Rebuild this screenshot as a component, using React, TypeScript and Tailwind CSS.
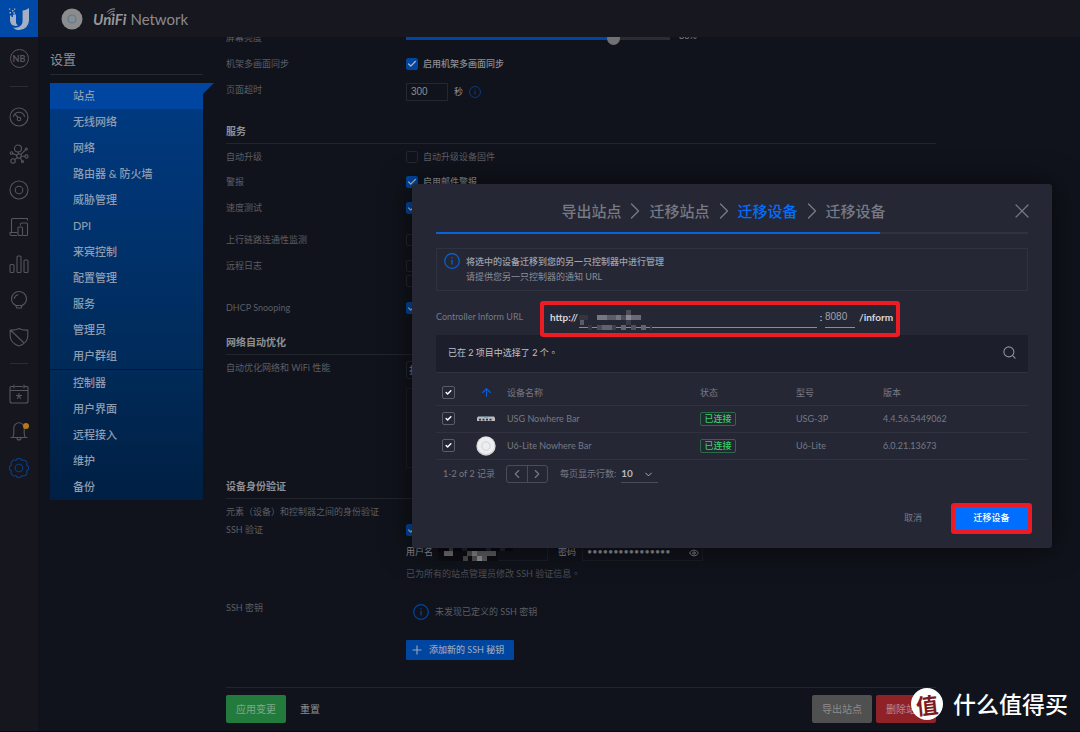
import type { ReactNode } from "react"
import clsx from "clsx"
import { ArrowUp, Check as CheckIcon, ChevronDown, ChevronLeft, ChevronRight, Eye, Plus, Search, X } from "lucide-react"

const siteMenu = [
  "站点",
  "无线网络",
  "网络",
  "路由器 & 防火墙",
  "威胁管理",
  "DPI",
  "来宾控制",
  "配置管理",
  "服务",
  "管理员",
  "用户群组",
]
const controllerMenu = ["控制器", "用户界面", "远程接入", "维护", "备份"]

const devices = [
  { kind: "gateway", name: "USG Nowhere Bar", model: "USG-3P", version: "4.4.56.5449062" },
  { kind: "ap", name: "U6-Lite Nowhere Bar", model: "U6-Lite", version: "6.0.21.13673" },
]

const steps = ["导出站点", "迁移站点", "迁移设备", "迁移设备"]

function Glyph({ children }: { children: ReactNode }) {
  return (
    <svg
      viewBox="0 0 20 20"
      className="size-5"
      fill="none"
      stroke="currentColor"
      strokeWidth="1.1"
      strokeLinecap="round"
      strokeLinejoin="round"
      aria-hidden="true"
    >
      {children}
    </svg>
  )
}

const mainIcons = [
  {
    label: "仪表板",
    icon: (
      <Glyph>
        <circle cx="10" cy="10" r="9" />
        <path d="M4.5 9.5a5.700 5.700 0 0 1 11 0M6.500 7.800l2.600 2.700" />
        <circle cx="10" cy="12" r="1.800" />
      </Glyph>
    ),
  },
  {
    label: "拓扑",
    icon: (
      <Glyph>
        <circle cx="9" cy="4.5" r="3.5" />
        <circle cx="10" cy="12" r="2.3" />
        <circle cx="2.5" cy="9" r="1.3" />
        <circle cx="17.5" cy="12.5" r="1.6" />
        <circle cx="4" cy="17" r="2.2" />
        <circle cx="17.3" cy="5" r="1" />
        <circle cx="13.5" cy="17.5" r="1" />
        <path d="M9.3 8l.3 1.7M3.8 9.4l4 1.8M12.3 12.2h3.6M8.3 13.6l-2.8 2M11.8 10.4l4.8-4.6M11.2 14l1.800 2.700" />
      </Glyph>
    ),
  },
  {
    label: "设备",
    icon: (
      <Glyph>
        <circle cx="10" cy="10" r="9" />
        <circle cx="10" cy="10" r="3.8" />
      </Glyph>
    ),
  },
  {
    label: "客户端",
    icon: (
      <Glyph>
        <path d="M18.5 1.5h-15a1 1 0 0 0-1 1v13M18.5 1.5v1.5M7.5 18.5h-5a1.500 1.500 0 0 1-1.500-1.500v-1.500h7" />
        <rect x="9" y="10" width="4.5" height="8.5" rx="1" />
        <path d="M11.500 8V7a1 1 0 0 1 1-1h5a1 1 0 0 1 1 1v10.500a1 1 0 0 1-1 1h-3" />
      </Glyph>
    ),
  },
  {
    label: "统计",
    icon: (
      <Glyph>
        <rect x="1" y="10.500" width="4" height="8" rx="1" />
        <rect x="8" y="2" width="4" height="16.500" rx="1" />
        <rect x="15" y="6" width="4" height="12.500" rx="1" />
      </Glyph>
    ),
  },
  {
    label: "洞察",
    icon: (
      <Glyph>
        <path d="M7 15.500C4 14 2.500 11.700 2.500 9a7.500 7.500 0 0 1 15 0c0 2.700-1.500 5-4.500 6.500z" />
        <path d="M7 16l.8 2h4.400l.8-2M5.300 8.500c.3-2 1.600-3.400 3.700-3.800" />
      </Glyph>
    ),
  },
  {
    label: "威胁管理",
    icon: (
      <Glyph>
        <path d="M10 1.500c2.600 1.300 5.400 1.800 8.800 1.500v6c0 4.800-3.300 8-8.800 10C4.500 17 1.200 13.800 1.200 9V3c3.400.3 6.200-.2 8.800-1.500zM1.500 3l13.500 13" />
      </Glyph>
    ),
  },
]

const lowerIcons = [
  {
    label: "事件",
    icon: (
      <Glyph>
        <path d="M4 2.500H2a1 1 0 0 0-1 1V17a2 2 0 0 0 2 2h14a2 2 0 0 0 2-2V3.500a1 1 0 0 0-1-1h-2M6.500 2.500h7M1 6.500h18M5 1v3M15 1v3" />
        <path d="M10 9.500v2.500M10 12l-2.500-.6M10 12l2.500-.6M10 12l-1.600 2.500M10 12l1.600 2.500" />
      </Glyph>
    ),
  },
  {
    label: "警报",
    icon: (
      <Glyph>
        <path d="M2 16.500h16M3.800 16.500c.8-1.500 1-3 1-5V7a5.200 5.200 0 0 1 10.400 0v4.500c0 2 .2 3.500 1 5M8 17a2 2 0 0 0 4 0" />
        <circle cx="17" cy="5" r="3" fill="#b87818" stroke="none" />
      </Glyph>
    ),
  },
  {
    label: "设置",
    icon: (
      <Glyph>
        <circle cx="10" cy="10" r="3.8" />
        <path d="M17.600 6.900A3.400 3.400 0 0 1 17.600 13.100A3.400 3.400 0 0 1 13.100 17.600A3.400 3.400 0 0 1 6.900 17.600A3.400 3.400 0 0 1 2.400 13.100A3.400 3.400 0 0 1 2.400 6.900A3.400 3.400 0 0 1 6.900 2.400A3.400 3.400 0 0 1 13.100 2.400A3.400 3.400 0 0 1 17.600 6.900z" />
      </Glyph>
    ),
  },
]

function Logo() {
  return (
    <svg viewBox="0 0 22 24" className="h-6 w-[22px]" fill="currentColor" aria-hidden="true">
      <path d="M21 1v12.500a9.800 9.800 0 0 1-9.500 9.500c-3 0-5-1-6.500-2.600 2.800.8 5.300.3 7.200-1.300 1.600-1.300 2.400-3 2.400-5.400V3.500C17 3.200 19 2.500 21 1z" />
      <path d="M2 8.500h1.500V10H5V7.500h3v7.200c0 1.800.7 3 2.300 3.600-2 .9-4.300.8-6.300-.2-1.300-1.600-2-3.300-2-5.300z" />
      <path d="M1 1.500h1.300v1.300H1zM4 3h1.500v1.500H4zM6 1.500h1.300v1.300H6zM1.500 5h1.500v1.500H1.500zM5.500 5.300H7v1.500H5.500z" />
    </svg>
  )
}

function InfoIcon({ className }: { className?: string }) {
  return (
    <svg viewBox="0 0 16 16" className={clsx("shrink-0", className)} fill="none" stroke="currentColor" aria-hidden="true">
      <circle cx="8" cy="8" r="7.3" strokeWidth="1.2" />
      <path d="M8 7v4.500M8 4.300v1.300" strokeWidth="1.300" />
    </svg>
  )
}

function Mosaic({ cells, className }: { cells: [number, number, number, string][]; className?: string }) {
  return (
    <svg viewBox="0 0 80 20" className={clsx("pointer-events-none absolute h-5 w-20", className)} aria-hidden="true">
      {cells.map(([x, y, w, fill]) => (
        <rect key={`${x}-${y}`} x={x} y={y} width={w} height="5" fill={fill} />
      ))}
    </svg>
  )
}

const hostCells: [number, number, number, string][] = [
  [47, 0, 5, "#4c4d59"],
  [0, 5, 9, "#343541"],
  [18, 5, 10, "#767781"],
  [28, 5, 9, "#5b5c68"],
  [37, 5, 5, "#73747e"],
  [42, 5, 5, "#4a4b57"],
  [47, 5, 5, "#868790"],
  [52, 5, 10, "#696a75"],
  [1, 10, 4, "#5b5c68"],
  [47, 10, 5, "#3a3b47"],
  [9, 15, 4, "#343541"],
  [18, 15, 5, "#4a4b57"],
  [23, 15, 10, "#62636e"],
  [33, 15, 4, "#3e3f4b"],
  [42, 15, 5, "#62636e"],
  [52, 15, 5, "#50515d"],
  [62, 15, 5, "#62636e"],
  [71, 15, 2, "#343541"],
]

const userCells: [number, number, number, string][] = [
  [0, 0, 75, "#090a11"],
  [11, 0, 4, "#3b3b3f"],
  [24, 0, 5, "#20212b"],
  [48, 0, 5, "#20212b"],
  [62, 0, 5, "#20212b"],
  [0, 5, 60, "#0d0e15"],
  [6, 5, 9, "#707073"],
  [29, 5, 5, "#505054"],
  [34, 5, 5, "#858587"],
  [39, 5, 19, "#5d5d61"],
  [0, 10, 60, "#0d0e15"],
  [25, 10, 5, "#4a4a4e"],
  [34, 10, 5, "#505054"],
  [39, 10, 5, "#929294"],
  [44, 10, 5, "#5d5d61"],
]

function Check({ label, checked, strong }: { label: string; checked?: boolean; strong?: boolean }) {
  return (
    <label className={clsx("flex items-center gap-[5px]", strong ? "font-medium text-[#8d8f95]" : "text-[#5c5e65]")}>
      <span className="relative flex">
        <input
          type="checkbox"
          defaultChecked={checked}
          className="peer size-3 appearance-none rounded-[2px] border border-[#25272e] checked:border-[#0046a0] checked:bg-[#0046a0]"
        />
        <CheckIcon className="pointer-events-none absolute inset-px hidden size-[10px] text-[#b0b8c4] peer-checked:block" strokeWidth={3} />
      </span>
      {label}
    </label>
  )
}

function TableCheck({ label }: { label: string }) {
  return (
    <span className="relative flex w-3">
      <input
        type="checkbox"
        defaultChecked
        aria-label={label}
        className="peer size-[13px] shrink-0 appearance-none rounded-[2px] border border-[#5a5c69]"
      />
      <CheckIcon className="pointer-events-none absolute top-[3px] left-[3px] hidden size-[7px] text-white peer-checked:block" strokeWidth={5} />
    </span>
  )
}

function Row({ label, className, children }: { label: string; className?: string; children?: ReactNode }) {
  return (
    <div className={clsx("grid grid-cols-[180px_1fr] leading-[26px]", className)}>
      <span>{label}</span>
      <div>{children}</div>
    </div>
  )
}

function Heading({ className, children }: { className?: string; children: ReactNode }) {
  return (
    <h2 className={clsx("flex items-end border-b border-[#23252c] pb-1 text-[10px] leading-4 font-bold text-[#8d8f94]", className)}>
      {children}
    </h2>
  )
}

function Menu({ items, className, active }: { items: string[]; className: string; active?: string }) {
  return (
    <ul className={className}>
      {items.map((item) => (
        <li key={item} className="relative">
          <a
            href="#"
            className={clsx(
              "block h-[26px] pl-[23px] text-[11px] leading-[26px] font-medium text-[#8f9db1]",
              item === active && "bg-[#0046a0]",
            )}
          >
            {item}
          </a>
          {item === active && (
            <svg viewBox="0 0 11 11" className="absolute top-0 left-full size-[11px]" aria-hidden="true">
              <path d="M0 0h11L0 11z" fill="#0046a0" />
            </svg>
          )}
        </li>
      ))}
    </ul>
  )
}

function Header() {
  return (
    <header className="flex h-[37px] items-center bg-[#17171f] text-[#8b8b8f]">
      <a href="#" aria-label="Ubiquiti" className="flex h-full w-[38px] items-center justify-center bg-[#0049a6] text-[#a5b1c2]">
        <Logo />
      </a>
      <svg viewBox="0 0 22 22" className="ml-[23px] size-[22px]" aria-hidden="true">
        <circle cx="11" cy="11" r="10.5" fill="#8c8c8c" />
        <circle cx="11" cy="11" r="4" fill="none" stroke="#4e7f9d" strokeWidth="1.2" />
      </svg>
      <div className="ml-[10px] flex items-baseline gap-1 text-[15px] leading-5">
        <span className="relative font-bold text-[#96969a] italic">
          UniFi
          <svg viewBox="0 0 10 8" className="absolute -top-px left-[13px] h-2 w-[10px]" fill="none" stroke="currentColor" aria-hidden="true">
            <path d="M1 4.500C3 1.500 6 .5 9 1M2.500 6.200C4 4 6 3 8.500 3.400M4.300 7.500C5.200 6.200 6.500 5.600 8 5.800" />
          </svg>
        </span>
        <span>Network</span>
      </div>
    </header>
  )
}

function Rail() {
  return (
    <aside className="flex w-[38px] shrink-0 flex-col items-center bg-[#16161e] pt-3 text-[#56565e]">
      <button aria-label="Nowhere Bar" className="size-[19px] rounded-full border border-current text-[9px] leading-4 font-bold">
        NB
      </button>
      <hr className="mt-[18px] w-[18px] border-[#2c2c34]" />
      <nav className="mt-5 flex h-[240px] flex-col justify-between">
        {mainIcons.map(({ label, icon }) => (
          <a key={label} href="#" aria-label={label}>
            {icon}
          </a>
        ))}
      </nav>
      <hr className="mt-4 w-[18px] border-[#2c2c34]" />
      <nav className="mt-5 flex flex-col gap-[17px]">
        {lowerIcons.map(({ label, icon }) => (
          <a key={label} href="#" aria-label={label} className={clsx(label === "设置" && "text-[#083f8a]")}>
            {icon}
          </a>
        ))}
      </nav>
    </aside>
  )
}

function Settings() {
  return (
    <main className="mr-36 ml-[23px] min-w-0 flex-1 overflow-hidden text-[9px] text-[#5c5e65]">
      <div className="-mt-3">
        <Row label="屏幕亮度">
          <div className="flex h-[26px] items-center gap-[9px]">
            <input
              type="range"
              aria-label="屏幕亮度"
              defaultValue={80}
              className="h-[3px] w-[264px] appearance-none bg-[linear-gradient(to_right,#0046a0_79%,#2a2c33_79%)] [&::-webkit-slider-thumb]:size-[13px] [&::-webkit-slider-thumb]:appearance-none [&::-webkit-slider-thumb]:rounded-full [&::-webkit-slider-thumb]:bg-[#6f7175]"
            />
            <span className="pb-1 text-[#85878d]">80%</span>
          </div>
        </Row>
        <Row label="机架多画面同步">
          <Check label="启用机架多画面同步" checked strong />
        </Row>
        <Row label="页面超时" className="h-[26px]">
          <div className="flex items-center gap-1.5 pt-0.5 text-[#8d8f95]">
            <input
              aria-label="页面超时"
              defaultValue="300"
              className="h-[18px] w-[42px] border border-[#25272e] px-1 font-['Liberation_Sans',sans-serif] text-[10px]"
            />
            <span>秒</span>
            <InfoIcon className="size-3 text-[#083f8a]" />
          </div>
        </Row>
        <Heading className="h-[41px]">服务</Heading>
        <Row label="自动升级" className="h-[25px]">
          <Check label="自动升级设备固件" />
        </Row>
        <Row label="警报">
          <Check label="启用邮件警报" checked strong />
        </Row>
        <Row label="速度测试" className="h-8">
          <Check label="启用定期速度测试" checked strong />
        </Row>
        <Row label="上行链路连通性监测">
          <Check label="启用连通性监测" />
        </Row>
        <Row label="远程日志" className="h-[42px]">
          <div className="leading-[15px]">
            <div className="pt-[5px]">
              <Check label="启用 Syslog" />
            </div>
            <Check label="启用 Netconsole" />
          </div>
        </Row>
        <Row label="DHCP Snooping">
          <Check label="启用 DHCP Snooping" checked strong />
        </Row>
        <Heading className="h-[34px]">网络自动优化</Heading>
        <Row label="自动优化网络和 WiFi 性能" className="h-28">
          <div className="flex flex-col gap-[9px] pt-1.5">
            <select
              aria-label="自动优化网络和 WiFi 性能"
              className="h-[18px] w-40 appearance-none rounded-[2px] border border-[#25272e] px-0.5 text-[10px] leading-4 text-[#85878d]"
            >
              <option>打开</option>
            </select>
            <textarea aria-label="优化说明" className="h-20 resize-none border border-[#1c1e26]" />
          </div>
        </Row>
        <Heading className="h-8">设备身份验证</Heading>
        <p className="h-[18px] leading-[26px]">元素（设备）和控制器之间的身份验证</p>
        <Row label="SSH 验证">
          <Check label="启用 SSH 验证" checked strong />
          <div className="flex h-[18px] items-center text-[#8d8f95]">
            <label htmlFor="ssh-user">用户名</label>
            <span className="relative ml-[5px] flex">
              <input id="ssh-user" className="h-[17px] w-[110px] border border-[#1c1e26]" />
              <Mosaic cells={userCells} className="top-0.5 left-0" />
            </span>
            <label htmlFor="ssh-password" className="ml-[10px]">
              密码
            </label>
            <span className="relative ml-1.5 flex">
              <input
                id="ssh-password"
                type="password"
                defaultValue="nowherebar-nw-16"
                className="h-[17px] w-[121px] border border-[#1c1e26] pr-4 pl-1 text-[9px]"
              />
              <Eye className="absolute top-1 right-1 size-[10px]" />
            </span>
          </div>
          <p className="text-[#4d4f55]">
            已为所有的站点管理员修改 SSH 验证信息<span className="font-['Noto_Sans_CJK_TC',sans-serif]">。</span>
          </p>
        </Row>
        <Row label="SSH 密钥" className="mt-2">
          <p className="mt-1 flex items-center gap-1.5 pl-[7px]">
            <InfoIcon className="size-4 text-[#0046a0]" />
            未发现已定义的 SSH 密钥
          </p>
          <button className="mt-[15px] flex h-5 w-[108px] items-center gap-[5px] rounded-[1px] bg-[#0046a0] px-1 leading-5 font-medium text-[#96a5ba]">
            <Plus className="size-[14px]" strokeWidth={2} />
            添加新的 SSH 秘钥
          </button>
        </Row>
        <div className="mt-[27px] flex items-center gap-1 border-t border-[#23252c] pt-[7px] pb-[7px]">
          <button className="h-7 rounded-[2px] bg-[#227a3d] px-[10px] text-[10px] text-[#7fa98c]">应用变更</button>
          <button className="mr-auto h-7 px-[10px] text-[10px] text-[#8d8f94]">重置</button>
          <button className="h-7 rounded-[2px] bg-[#505050] px-[10px] text-[10px] text-[#8c8c8c]">导出站点</button>
          <button className="h-7 rounded-[2px] bg-[#8e2226] px-[10px] text-[10px] text-[#bd8a8c]">删除站点</button>
        </div>
      </div>
    </main>
  )
}

function DeviceIcon({ kind }: { kind: string }) {
  if (kind === "ap") {
    return (
      <svg viewBox="0 0 20 20" className="mx-auto size-5" aria-hidden="true">
        <circle cx="10" cy="10" r="9.7" fill="#d4d4d6" />
        <circle cx="10" cy="9.5" r="8.5" fill="#eeeeef" />
        <circle cx="10" cy="10" r="4.2" fill="none" stroke="#c5d5ea" />
      </svg>
    )
  }
  return (
    <svg viewBox="0 0 20 20" className="mx-auto size-5" aria-hidden="true">
      <path d="M2 7.500h16l1 1.500v3H1V9z" fill="#b9bbbd" />
      <path d="M3 9.700h2v1.800H3zM6.500 9.700h2v1.800h-2zM10 9.700h2v1.800h-2zM13.500 9.700h2v1.800h-2z" fill="#30323c" />
      <path d="M8 7.500h4v1H8z" fill="#2f9ac4" />
    </svg>
  )
}

function MigrateDialog() {
  return (
    <section
      role="dialog"
      aria-label="迁移设备"
      className="w-[640px] rounded-[3px] bg-[#252734] px-6 pb-[18px] text-[9px] text-[#777984] shadow-[0_0_30px_rgba(0,0,0,0.6)]"
    >
      <div className="flex h-12 items-center pt-1.5">
        <ol className="flex flex-1 items-center justify-center text-[15px] leading-5 font-medium">
          {steps.map((step, i) => (
            <li key={i} className={clsx("flex items-center", i === 2 && "text-[#006fff]")}>
              {i > 0 && <ChevronRight className="size-7 text-[#777984]" strokeWidth={1.2} />}
              {step}
            </li>
          ))}
        </ol>
        <button aria-label="关闭" className="flex w-[17px] justify-end">
          <X className="-mr-1.5 size-6 shrink-0" strokeWidth={1.2} />
        </button>
      </div>
      <div className="h-0.5 bg-[#30323f]">
        <div className="h-full w-3/4 bg-[#0a62d8]" />
      </div>

      <div className="mt-3.5 flex gap-1.5 border border-[#30323f] px-[7px] pt-1 pb-1.5 leading-[15px]">
        <InfoIcon className="size-4 text-[#0a62d8]" />
        <div className="pt-px">
          <p className="font-medium text-[#a0a2ab]">将选中的设备迁移到您的另一只控制器中进行管理</p>
          <p className="text-[#8c8e98]">请提供您另一只控制器的通知 URL</p>
        </div>
      </div>

      <div className="relative z-10 mt-[14px] flex h-7 text-[#d8d9dd]">
        <label htmlFor="inform-host" className="w-[108px] pt-px leading-[22px] text-[#777984]">
          Controller Inform URL
        </label>
        <div className="flex h-7 rounded-[1px] pt-px pr-[3px] pl-1.5 text-[10px] leading-[22px] ring-4 ring-[#ed1c24]">
          <span className="w-[29px] font-bold">http://</span>
          <span className="relative">
            <input id="inform-host" className="block h-[22px] w-[238px] border-b border-[#8a8c96]" />
            <Mosaic cells={hostCells} className="top-1 left-0" />
          </span>
          <span className="w-2 text-center">:</span>
          <input
            aria-label="端口"
            defaultValue="8080"
            className="h-[22px] w-[30px] border-b border-[#8a8c96] font-['Liberation_Sans',sans-serif] text-[10px] text-[#a0a2ab]"
          />
          <span className="ml-1 font-bold">/inform</span>
        </div>
      </div>

      <div className="mt-0.5 flex h-[38px] items-center justify-between border-b border-[#30323f] bg-[#1c1e2b] pr-[11px] pb-0.5 pl-3 text-[#c0c2c8]">
        <span>
          已在 2 项目中选择了 2 个<span className="font-['Noto_Sans_CJK_TC',sans-serif]">。</span>
        </span>
        <button aria-label="搜索">
          <Search className="size-[15px] text-[#8c8e98]" strokeWidth={1.8} />
        </button>
      </div>

      <table className="w-full table-fixed text-left">
        <colgroup>
          <col className="w-[29px]" />
          <col className="w-[42px]" />
          <col className="w-[193px]" />
          <col className="w-24" />
          <col className="w-[87px]" />
          <col />
        </colgroup>
        <thead>
          <tr className="h-8 border-b border-[#30323f] [&>th]:pt-2 [&>th]:font-normal">
            <th className="pl-1.5">
              <TableCheck label="全选" />
            </th>
            <th>
              <ArrowUp className="mx-auto size-[13px] text-[#0a62d8]" />
            </th>
            <th>设备名称</th>
            <th>状态</th>
            <th>型号</th>
            <th>版本</th>
          </tr>
        </thead>
        <tbody>
          {devices.map((d) => (
            <tr key={d.name} className="h-[27px] border-b border-[#30323f]">
              <td className="pl-1.5">
                <TableCheck label={d.name} />
              </td>
              <td>
                <DeviceIcon kind={d.kind} />
              </td>
              <td>{d.name}</td>
              <td>
                <span className="block w-9 rounded-[2px] border border-[#2a6a48] text-center leading-3 font-medium text-[#38cc65]">
                  已连接
                </span>
              </td>
              <td>{d.model}</td>
              <td>{d.version}</td>
            </tr>
          ))}
        </tbody>
      </table>

      <div className="mt-[5px] flex h-[18px] items-center pl-[7px]">
        <span className="w-[63px]">1-2 of 2 记录</span>
        <div className="flex h-[18px] w-[42px] divide-x divide-[#4a4c58] rounded-[3px] border border-[#4a4c58]">
          <button aria-label="上一页" className="flex flex-1 items-center justify-center">
            <ChevronLeft className="size-[14px]" />
          </button>
          <button aria-label="下一页" className="flex flex-1 items-center justify-center">
            <ChevronRight className="size-[14px]" />
          </button>
        </div>
        <label htmlFor="page-size" className="ml-3">
          每页显示行数:
        </label>
        <span className="relative ml-[5px] flex">
          <select
            id="page-size"
            className="h-[18px] w-[37px] appearance-none border-b border-[#4a4c58] text-[10px] font-bold text-[#b6b8be]"
          >
            <option>10</option>
          </select>
          <ChevronDown className="pointer-events-none absolute top-1 right-1 size-[11px] text-[#b6b8be]" />
        </span>
      </div>

      <div className="mt-6 flex items-center justify-end gap-[33px]">
        <button>取消</button>
        <button className="h-[23px] w-[73px] rounded-[1px] bg-[#006fff] font-medium text-white ring-4 ring-[#ed1c24]">迁移设备</button>
      </div>
    </section>
  )
}

export default function App() {
  return (
    <div className="relative flex min-h-screen flex-col overflow-hidden border-b border-[#0a0512] bg-[#10131b] font-['Lato','Noto_Sans_CJK_SC',sans-serif]">
      <Header />
      <div className="flex flex-1">
        <Rail />
        <div className="ml-3 w-[153px] shrink-0 pt-3">
          <h1 className="border-b border-[#26282f] pb-[5px] text-[13px] leading-5 text-[#8d8f95]">设置</h1>
          <Menu items={siteMenu} active="站点" className="mt-2 bg-linear-to-b from-[#003b84] to-[#002a58]" />
          <Menu items={controllerMenu} className="mt-px bg-linear-to-b from-[#002a58] to-[#001f43]" />
        </div>
        <Settings />
      </div>

      <div className="absolute inset-0 flex items-start justify-end pt-[184px] pr-7">
        <MigrateDialog />
      </div>

      <div className="absolute right-3 bottom-[11px] flex items-center gap-[10px] text-white">
        <span className="flex size-8 items-center justify-center rounded-full bg-white font-['Noto_Sans_CJK_SC',sans-serif] text-[22px] leading-8 font-bold text-[#7d1a1e]">
          <span className="-rotate-6">值</span>
        </span>
        <span className="text-[23px] leading-8 font-medium">什么值得买</span>
      </div>
    </div>
  )
}
